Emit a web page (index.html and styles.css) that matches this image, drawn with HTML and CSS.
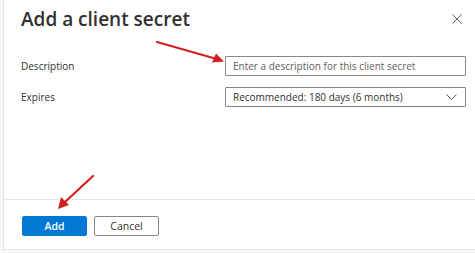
FILE: index.html
```html
<!DOCTYPE html>
<html lang="en">
<head>
<meta charset="utf-8">
<title>Add a client secret</title>
<link rel="stylesheet" href="styles.css">
</head>
<body>
<div class="panel">
  <div class="main">
    <header class="head">
      <h1 class="title">Add a client secret</h1>
      <button class="close" aria-label="Close">
        <svg width="10" height="10" viewBox="0 0 10 10"><path d="M0.5 0.5 L9.5 9.5 M9.5 0.5 L0.5 9.5" stroke="#605e5c" stroke-width="1" fill="none"/></svg>
      </button>
    </header>
    <div class="form">
      <label class="label" for="desc">Description</label>
      <input class="field" id="desc" type="text" placeholder="Enter a description for this client secret">
      <span class="label">Expires</span>
      <div class="field select">
        <span>Recommended: 180 days (6 months)</span>
        <svg width="11" height="6" viewBox="0 0 11 6"><path d="M0.5 0.5 L5.5 5.5 L10.5 0.5" stroke="#605e5c" stroke-width="1" fill="none"/></svg>
      </div>
    </div>
  </div>
  <footer class="foot">
    <button class="btn primary">Add</button>
    <button class="btn secondary">Cancel</button>
  </footer>
  <svg class="arrows" width="475" height="253" viewBox="0 0 475 253">
    <line x1="156" y1="42" x2="214" y2="58.5" stroke="#d42020" stroke-width="2.2" stroke-linecap="round"/>
    <polygon points="223,61.5 211,62.5 215,53.5" fill="#d42020"/>
    <line x1="92" y1="176" x2="64" y2="202" stroke="#d42020" stroke-width="2.2" stroke-linecap="round"/>
    <polygon points="57,209 60,197 68,205" fill="#d42020"/>
  </svg>
</div>
</body>
</html>
```
FILE: styles.css
```css
html, body {
  margin: 0;
  padding: 0;
  background: #f8f8f8;
}
body {
  width: 475px;
  height: 253px;
  overflow: hidden;
  font-family: "Open Sans", "Noto Sans", sans-serif;
  color: #323130;
}
.panel {
  position: relative;
  margin-left: 3px;
  width: 472px;
  height: 250px;
  background: #ffffff;
  border-left: 1px solid #e3e3e3;
  border-bottom: 1px solid #e3e3e3;
  display: flex;
  flex-direction: column;
  box-sizing: border-box;
}
.main {
  flex: 1;
  padding: 0 9px 0 17px;
}
.head {
  display: flex;
  justify-content: space-between;
  align-items: flex-start;
  height: 56px;
}
.title {
  margin: 6px 0 0 0;
  font-size: 19px;
  font-weight: 600;
  line-height: 26px;
  color: #323130;
}
.close {
  margin: 14px 4px 0 0;
  padding: 0;
  border: 0;
  background: none;
  width: 10px;
  height: 10px;
  display: flex;
}
.form {
  display: grid;
  grid-template-columns: 204px 241px;
  row-gap: 11px;
  align-items: center;
}
.label {
  font-size: 10px;
  color: #323130;
}
.field {
  box-sizing: border-box;
  height: 20px;
  width: 241px;
  margin: 0;
  border: 1px solid #8a8886;
  border-radius: 1px;
  padding: 0 7px;
  font-family: inherit;
  font-size: 10px;
  color: #323130;
  background: #fff;
  outline: none;
}
.field::placeholder {
  color: #605e5c;
}
.select {
  display: flex;
  align-items: center;
  justify-content: space-between;
}
.select svg {
  margin-right: 1px;
}
.foot {
  border-top: 1px solid #e8e8e8;
  height: 50px;
  box-sizing: border-box;
  padding: 16px 0 0 18px;
  display: flex;
  gap: 7px;
  align-items: flex-start;
}
.btn {
  width: 65px;
  height: 20px;
  box-sizing: border-box;
  border-radius: 2px;
  font-family: inherit;
  font-size: 10.5px;
  font-weight: 600;
  padding: 0;
}
.primary {
  background: #0078d4;
  border: 1px solid #0078d4;
  color: #ffffff;
}
.secondary {
  background: #ffffff;
  border: 1px solid #8a8886;
  color: #323130;
  font-weight: 400;
}
.arrows {
  position: absolute;
  left: -3px;
  top: 0;
  pointer-events: none;
}
```
